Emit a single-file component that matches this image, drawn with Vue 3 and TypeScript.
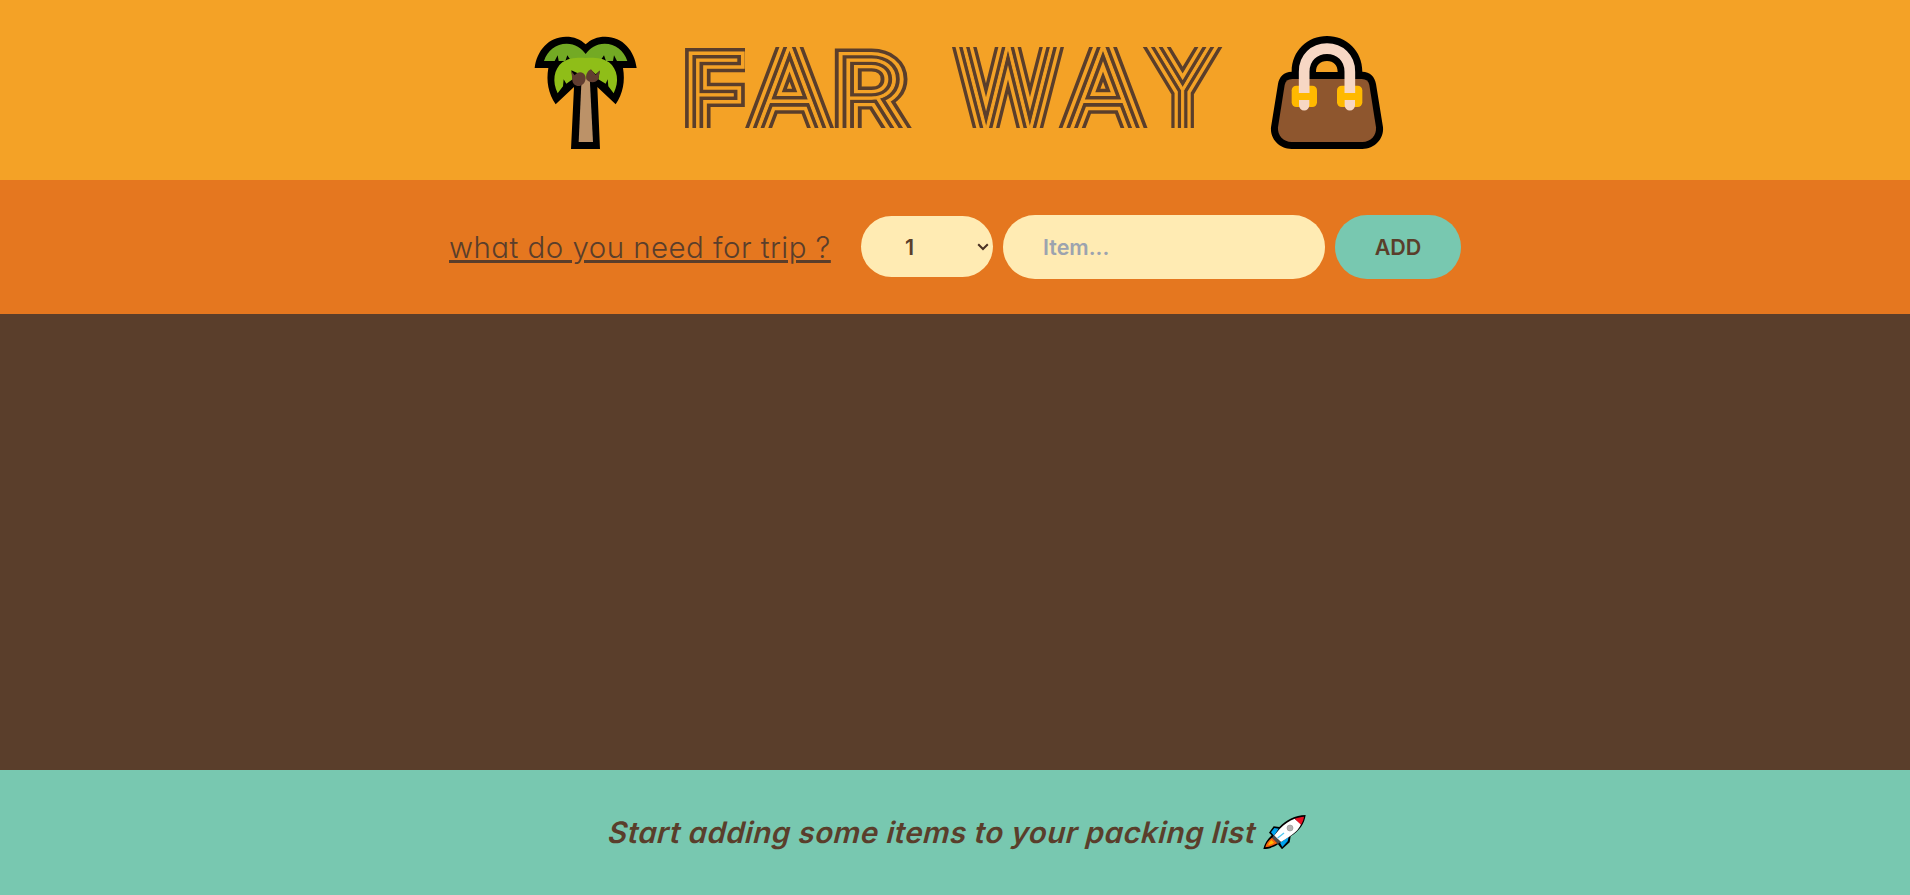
<script setup lang="ts">
import { ref } from 'vue'

interface Letter {
  id: string
  char: string
  anchor: 'start' | 'middle'
  size: number
  x: number
  y: number
  sx: number
  left: number
  right: number
}

interface Band {
  color: string
  width: number
}

const letters: Letter[] = [
  { id: 'l0', char: 'F', anchor: 'start', size: 98, x: 15, y: 100, sx: 1.05, left: 0, right: 75 },
  { id: 'l1', char: 'A', anchor: 'middle', size: 114, x: 119.5, y: 100, sx: 1.01, left: 60, right: 166 },
  { id: 'l2', char: 'R', anchor: 'start', size: 98, x: 164, y: 100, sx: 1.17, left: 150, right: 243 },
  { id: 'l3', char: 'W', anchor: 'middle', size: 116, x: 338, y: 100, sx: 0.9, left: 260, right: 410 },
  { id: 'l4', char: 'A', anchor: 'middle', size: 114, x: 433, y: 100, sx: 1.01, left: 380, right: 490 },
  { id: 'l5', char: 'Y', anchor: 'middle', size: 116, x: 512.5, y: 100, sx: 0.83, left: 460, right: 560 },
]

const bands: Band[] = [
  { color: '#5a3e2b', width: 22.6 },
  { color: '#f4a226', width: 15.4 },
  { color: '#5a3e2b', width: 8.2 },
  { color: '#f4a226', width: 1 },
]

const quantities: number[] = Array.from({ length: 20 }, (_, i) => i + 1)
const quantity = ref<number>(1)
const description = ref<string>('')
</script>

<template>
  <div class="app">
    <header class="brand">
      <svg class="palm" viewBox="0 0 390 420" aria-hidden="true">
        <path d="M44 144C50 92 86 50 138 50C162 50 182 58 197 73C212 58 232 50 256 50C308 50 344 92 350 144H309C316 184 309 220 287 253L232 201L240 387H153L162 201L107 253C85 220 78 184 85 144Z" fill="#000" />
        <path d="M72 123C82 91 108 71 140 71C165 71 185 84 197 102C209 84 229 71 254 71C286 71 312 91 322 123H291L282 106L279 123H258L252 106L244 118L197 130L150 118L142 106L136 123H116L113 106L104 123Z" fill="#73aa24" />
        <path d="M185 170H209L219 366H176Z" fill="#bc9268" />
        <path d="M113 220C96 185 101 148 127 127C145 113 176 112 197 114C218 112 249 113 267 127C293 148 299 185 281 220L265 199L263 178L257 191L235 178L239 152L227 163L213 150L199 178L180 163L154 151L158 178L139 191L131 178L129 199Z" fill="#8fbe18" />
        <path d="M154 153L164 166C172 156 182 154 190 160C197 166 198 174 196 180C194 191 185 198 176 198C165 198 157 190 157 179Z" fill="#613d30" />
        <path d="M199 178C196 164 202 153 213 148L227 165L240 151L235 178C230 184 225 187 218 187C210 187 203 184 199 178Z" fill="#613d30" />
      </svg>

      <svg class="title" viewBox="0 0 560 110" role="img" aria-label="Far Way">
        <defs>
          <clipPath v-for="l in letters" :id="'clip-' + l.id" :key="l.id">
            <rect :x="l.left" y="17" :width="l.right - l.left" height="81" />
          </clipPath>
          <text
            v-for="l in letters"
            :id="l.id"
            :key="l.id"
            class="glyph"
            :font-size="l.size"
            :text-anchor="l.anchor"
            :transform="`translate(${l.x} ${l.y}) scale(${l.sx} 1)`"
          >{{ l.char }}</text>
        </defs>
        <g v-for="l in letters" :key="l.id" :clip-path="`url(#clip-${l.id})`">
          <use v-for="b in bands" :key="b.width" :href="'#' + l.id" :fill="b.color" :stroke="b.color" :stroke-width="b.width" />
        </g>
      </svg>

      <svg class="bag" viewBox="0 0 420 420" aria-hidden="true">
        <path fill-rule="evenodd" d="M110 155C110 92 158 48 216 48C274 48 322 92 322 155C345 155 360 171 363 192L384 322C387 358 358 387 322 387H110C74 387 45 358 48 322L69 192C72 171 87 155 110 155ZM183 156H248C248 135 236 123 216 123C195 123 183 135 183 156Z" fill="#000" />
        <path d="M112 177H320Q340 177 343 195L363 322C365 347 347 366 322 366H110C85 366 67 347 69 322L89 195Q92 177 112 177Z" fill="#8e562e" />
        <rect x="110" y="197" width="76" height="64" rx="14" fill="#ffb900" /><rect x="246" y="197" width="76" height="64" rx="14" fill="#ffb900" />
        <path d="M147.500 219V155C147.500 113 178 86 216 86C254 86 284.500 113 284.500 155V219" fill="none" stroke="#f7d7c4" stroke-width="32" />
        <path d="M132 240H163V256A15.500 15.500 0 0 1 132 256ZM269 240H300V256A15.500 15.500 0 0 1 269 256Z" fill="#f7d7c4" />
      </svg>
    </header>

    <form class="add-form" @submit.prevent>
      <h3 class="question">what do you need for trip ?</h3>
      <div class="select-wrap">
        <select v-model="quantity" class="field quantity">
          <option v-for="n in quantities" :key="n" :value="n">{{ n }}</option>
        </select>
        <svg class="chevron" viewBox="0 0 12 8" aria-hidden="true"><path d="M1.200 1.200L6 6L10.800 1.200" /></svg>
      </div>
      <input v-model="description" class="field item" type="text" placeholder="Item..." />
      <button class="field add">ADD</button>
    </form>

    <main class="list"></main>

    <footer class="stats">
      <em class="message">Start adding some items to your packing list</em>
      <svg class="rocket" viewBox="0 0 180 165" aria-hidden="true">
        <path d="M152 30C120 31 93 45 73 66L56 64L42 83L50 91C36 104 29 117 25 132C43 132 57 126 69 118L81 133L104 112L107 94C133 78 148 57 152 30Z" fill="#000" />
        <path d="M71 71L58 69L48 82L57 92ZM101 96L98 109L82 126L75 113Z" fill="#00a4ef" />
        <path d="M74 72C89 56 103 47 119 41L138 58C130 76 117 87 98 98L78 111L57 92Z" fill="#fff" />
        <path d="M119 41C128 37 138 36 147 35C146 43 143 51 138 59Z" fill="#e81224" />
        <path d="M57 91L77 111L68 117L51 98Z" fill="#4d4d4d" />
        <path d="M51 98L67 115C54 122 43 126 31 127C33 115 41 106 51 98Z" fill="#f7630c" />
        <path d="M49 105L57 113Q46 120 39 120Q42 111 49 105Z" fill="#ffb900" />
        <circle cx="105" cy="69" r="9" fill="#b3b3b3" stroke="#999" stroke-width="2" />
        <path d="M68 99L87 84" stroke="#50c8f0" stroke-width="4" />
      </svg>
    </footer>
  </div>
</template>

<style>
body {
  margin: 0;
}
</style>

<style scoped>
.app {
  height: 895px;
  display: grid;
  grid-template-rows: 180px 134px 1fr 125px;
  overflow: hidden;
  background: #5a3e2b;
  color: #5a3e2b;
  font-family: Inter, sans-serif;
  font-feature-settings: 'cv11';
}
.brand {
  box-sizing: border-box;
  display: flex;
  justify-content: center;
  align-items: flex-start;
  padding: 20px 0 0 5px;
  background: #f4a226;
}
.palm { width: 130px; height: 140px; }
.title { width: 560px; height: 110px; margin: 10px 25px 0 20px; }
.bag { width: 140px; height: 140px; }
.glyph {
  font-family: Inter, sans-serif;
  font-weight: 100;
  stroke-linejoin: miter;
  stroke-miterlimit: 20;
  vector-effect: non-scaling-stroke;
}
.add-form {
  display: flex;
  align-items: center;
  justify-content: center;
  gap: 10px;
  background: #e5771f;
}
.question {
  width: 382px;
  margin: 0 20px 0 0;
  font-size: 29.5px;
  font-weight: 350;
  letter-spacing: 0.45px;
  white-space: nowrap;
  text-decoration: underline;
  text-decoration-thickness: 3px;
}
.field {
  box-sizing: border-box;
  height: 64px;
  border: 0;
  border-radius: 32px;
  outline: 0;
  background: #ffebb3;
  color: #5a3e2b;
  font: 600 21.5px Inter, sans-serif;
}
.select-wrap { display: grid; align-items: center; width: 132px; margin-bottom: 1px; }
.quantity, .chevron { grid-area: 1 / 1; }
.quantity {
  width: 132px;
  height: 61px;
  padding: 0 44px;
  appearance: none;
}
.chevron {
  justify-self: end;
  width: 12px;
  height: 8px;
  margin-right: 4px;
  fill: none;
  stroke: #4a3224;
  stroke-width: 2;
  pointer-events: none;
}
.item { width: 322px; padding: 0 40px; }
.item::placeholder { color: #9ca3af; opacity: 1; }
.add { width: 126px; padding: 0; background: #78c8b0; }
.stats {
  display: flex;
  align-items: center;
  justify-content: center;
  padding-left: 14px;
  background: #78c8b0;
}
.message {
  width: 646px;
  margin-bottom: 2px;
  font-size: 29.5px;
  font-style: normal;
  font-weight: 570;
  letter-spacing: 0.45px;
  white-space: nowrap;
  transform: skewX(-14deg);
}
.rocket { width: 60px; height: 55px; }
</style>
